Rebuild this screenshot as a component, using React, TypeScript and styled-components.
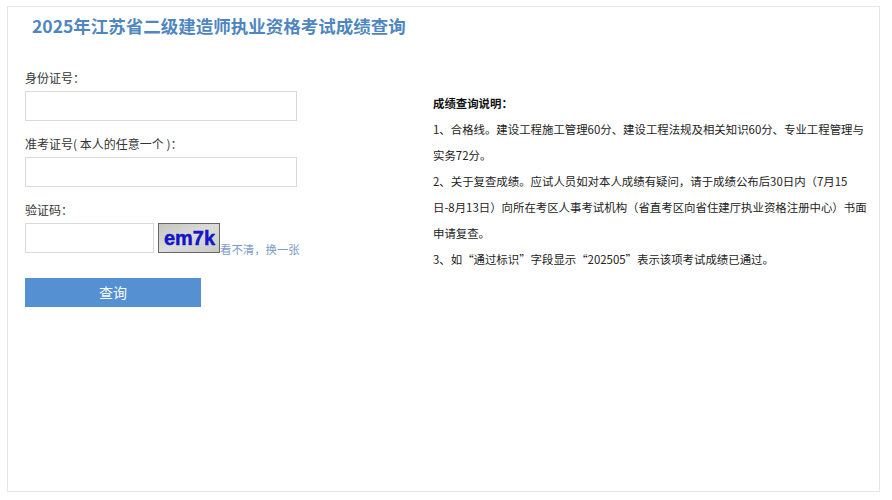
import React from 'react';
import styled, {createGlobalStyle} from 'styled-components';

const GlobalStyle = createGlobalStyle`
  html, body {
    margin: 0;
    padding: 0;
    background: #fff;
  }
  body {
    font-family: "Noto Sans CJK SC", "Liberation Sans", sans-serif;
  }
`;

const Page = styled.div`
  width: 892px;
  height: 500px;
  padding: 6px 0 0 7px;
  box-sizing: border-box;
`;

const Card = styled.div`
  width: 873px;
  height: 486px;
  box-sizing: border-box;
  border: 1px solid #e6e6e6;
  padding: 0 0 0 17px;
`;

const Title = styled.h1`
  margin: 0;
  padding: 6px 0 0 7px;
  height: 59px;
  box-sizing: border-box;
  font-size: 17.5px;
  line-height: 26px;
  font-weight: 700;
  color: #4f86c0;
`;

const Columns = styled.div`
  display: grid;
  grid-template-columns: 408px 436px;
`;

const Form = styled.form`
  display: flex;
  flex-direction: column;
`;

const Field = styled.div`
  display: flex;
  flex-direction: column;
  height: 66px;
`;

const Label = styled.label`
  font-size: 12px;
  line-height: 23px;
  height: 25px;
  color: #333;
`;

const TextInput = styled.input<{$short?: boolean}>`
  width: ${p => (p.$short ? '129px' : '272px')};
  height: 30px;
  box-sizing: border-box;
  border: 1px solid #d9d9d9;
  background: #fff;
  padding: 0 6px;
  outline: none;
`;

const CaptchaRow = styled.div`
  display: flex;
  align-items: flex-end;
`;

const Captcha = styled.svg`
  display: block;
  width: 62px;
  height: 30px;
  margin-left: 4px;
`;

const RefreshLink = styled.a`
  font-size: 11.4px;
  line-height: 13px;
  margin-bottom: -3px;
  white-space: nowrap;
  color: #7c9cc8;
  text-decoration: none;
`;

const SubmitButton = styled.button`
  width: 176px;
  height: 29px;
  margin-top: 14px;
  border: 0;
  padding: 0 0 2px;
  background: #5490d2;
  color: #fff;
  font-family: inherit;
  font-size: 14px;
`;

const Notes = styled.div`
  padding-top: 24px;
  font-size: 11.42px;
  line-height: 26px;
  white-space: nowrap;
  color: #222;
`;

const NotesTitle = styled.div`
  font-weight: 700;
  color: #111;
`;

const NotesItem = styled.p`
  margin: 0;
`;

function App() {
  return (
    <Page>
      <GlobalStyle />
      <Card>
        <Title>2025年江苏省二级建造师执业资格考试成绩查询</Title>
        <Columns>
          <Form>
            <Field>
              <Label>身份证号：</Label>
              <TextInput />
            </Field>
            <Field>
              <Label>准考证号( 本人的任意一个 )：</Label>
              <TextInput />
            </Field>
            <Field>
              <Label>验证码：</Label>
              <CaptchaRow>
                <TextInput $short />
                <Captcha viewBox="0 0 62 30">
                  <defs>
                    <linearGradient id="captchaBg" x1="0" y1="0" x2="1" y2="1">
                      <stop offset="0" stopColor="#c4c4c0" />
                      <stop offset="0.5" stopColor="#dcdcd8" />
                      <stop offset="1" stopColor="#c8c8c4" />
                    </linearGradient>
                  </defs>
                  <rect x="0.5" y="0.5" width="61" height="29" fill="url(#captchaBg)" stroke="#666" />
                  <text
                    x="6"
                    y="22"
                    fontFamily="Liberation Sans"
                    fontWeight="700"
                    fontSize="21"
                    fill="#1414c8"
                    stroke="#1414c8"
                    strokeWidth="0.5"
                    textLength="51"
                    lengthAdjust="spacingAndGlyphs"
                  >
                    em7k
                  </text>
                </Captcha>
                <RefreshLink href="#">看不清，换一张</RefreshLink>
              </CaptchaRow>
            </Field>
            <SubmitButton type="button">查询</SubmitButton>
          </Form>
          <Notes>
            <NotesTitle>成绩查询说明：</NotesTitle>
            <NotesItem>
              1、合格线。建设工程施工管理60分、建设工程法规及相关知识60分、专业工程管理与
              <br />
              实务72分。
            </NotesItem>
            <NotesItem>
              2、关于复查成绩。应试人员如对本人成绩有疑问，请于成绩公布后30日内（7月15
              <br />
              日-8月13日）向所在考区人事考试机构（省直考区向省住建厅执业资格注册中心）书面
              <br />
              申请复查。
            </NotesItem>
            <NotesItem>3、如“通过标识”字段显示“202505”表示该项考试成绩已通过。</NotesItem>
          </Notes>
        </Columns>
      </Card>
    </Page>
  );
}

export default App;
